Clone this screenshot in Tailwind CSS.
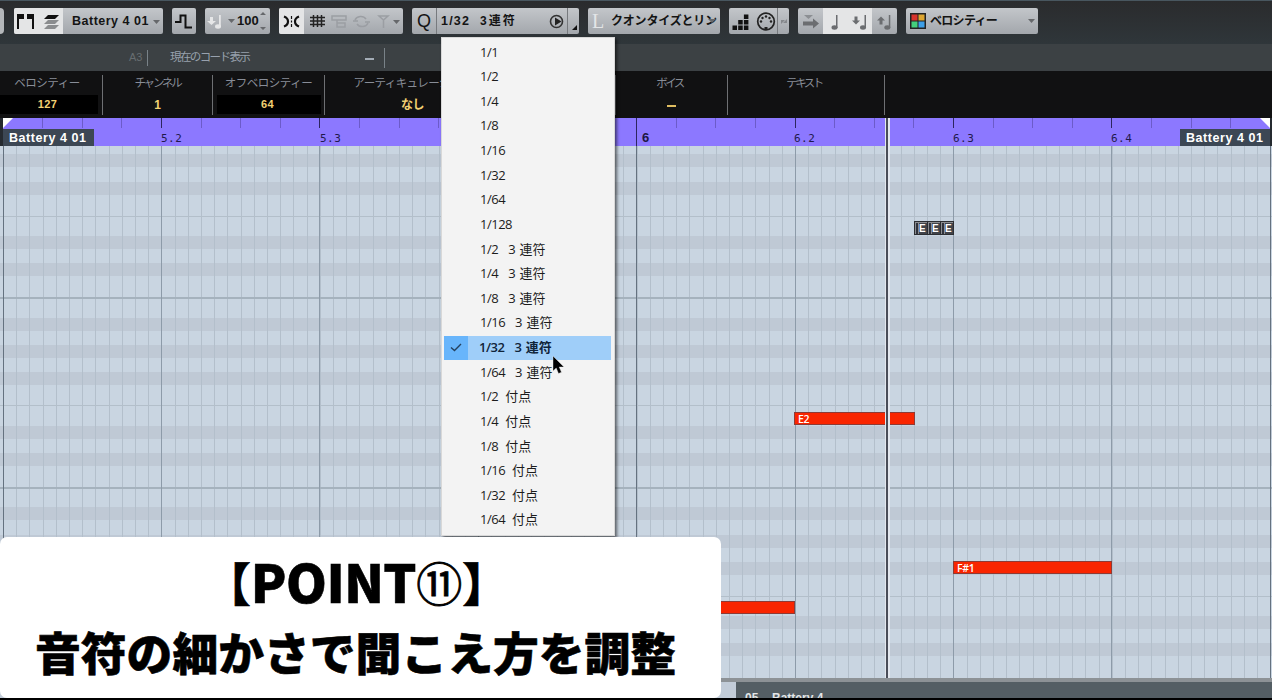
<!DOCTYPE html>
<html lang="ja">
<head>
    <meta charset="UTF-8">
    <meta name="viewport" content="width=device-width, initial-scale=1.0">
    <title>Key Editor</title>
    <script src="https://cdn.jsdelivr.net/npm/@tailwindcss/browser@4"></script>
</head>
<body class="overflow-hidden bg-black">
    <div class="relative flex h-[700px] w-[1272px] flex-col overflow-hidden font-['Liberation_Sans','Noto_Sans_CJK_JP',sans-serif]">

        <!-- Toolbar -->
        <div class="flex h-11 shrink-0 items-start gap-[9px] border-t border-[#48565f] bg-linear-to-b from-[#2a2b2d] to-[#2f363a] pt-[7px] text-[#141414]">
            <div class="mr-px h-[26px] w-1 rounded-r-sm bg-[#b4b7ba]"></div>

            <div class="flex h-[26px] w-[149px] items-center overflow-hidden rounded-[2px] bg-linear-to-b from-[#c3c6ca] to-[#a3a7ac]">
                <div class="flex h-full w-[49px] items-center bg-[#e4e5e6]">
                    <svg width="49" height="26" viewBox="0 0 49 26">
                        <path d="M3 6h7v5H5v10H3zM13 6h7v15h-2V11h-5z" fill="#111"/>
                        <path d="M34 7h11l-4 4H30z" fill="#111"/>
                        <path d="M34 12h11l-4 4H30zM34 17h11l-4 4H30z" fill="#8b8d8f"/>
                    </svg>
                </div>
                <span class="ml-[9px] w-[81px] text-[12.5px] font-bold tracking-[0.5px] whitespace-nowrap">Battery 4 01</span>
                <svg width="7" height="4" class="mt-px"><path d="M0 0h7L3.500 4z" fill="#66686b"/></svg>
            </div>

            <div class="h-[26px] w-6 rounded-[2px] bg-linear-to-b from-[#c3c6ca] to-[#a3a7ac]">
                <svg width="24" height="26" viewBox="0 0 24 26"><path d="M3 14h5.500V7.500h5V19.500H20" fill="none" stroke="#111" stroke-width="2"/></svg>
            </div>

            <div class="flex h-[26px] w-[65px] items-center rounded-[2px] bg-linear-to-b from-[#c3c6ca] to-[#a3a7ac]">
                <svg width="22" height="26" viewBox="0 0 22 26" class="shrink-0">
                    <path d="M5 9h3v4h3l-4.500 4L2 13h3zM14 7h1.800v12H14z" fill="#e6e7e8"/>
                    <ellipse cx="13" cy="18.500" rx="3" ry="2.200" fill="#e6e7e8"/>
                </svg>
                <svg width="7" height="4" class="ml-px shrink-0"><path d="M0 0h7L3.500 4z" fill="#66686b"/></svg>
                <span class="ml-[2px] w-[23px] text-[13px] font-bold">100</span>
                <svg width="6" height="22" viewBox="0 0 6 22"><path d="M0 5h6L3 2zM0 17h6l-3 3z" fill="#66686b"/></svg>
            </div>

            <div class="flex h-[26px] w-[124px] items-center overflow-hidden rounded-[2px] bg-linear-to-b from-[#c3c6ca] to-[#a3a7ac]">
                <svg width="124" height="26" viewBox="0 0 124 26">
                    <rect width="25" height="26" fill="#e4e5e6"/>
                    <path d="M5 8.500q4 1.500 4 5t-4 5M20 8.500q-4 1.500-4 5t4 5" fill="none" stroke="#111" stroke-width="2.200"/>
                    <path d="M12.500 8v3M12.500 12.500v2M12.500 16v3" stroke="#111" stroke-width="1.200"/>
                    <path d="M34.500 7v12M38.500 7v12M42.500 7v12M31 9.500h15M31 13h15M31 16.500h15" stroke="#222" stroke-width="1.500"/>
                    <g fill="none" stroke="#9b9ea3" stroke-width="1.500">
                        <rect x="53" y="8" width="14" height="4"/><path d="M58 12v7h8v-4h-8"/>
                        <path d="M76 12a6 5 0 0 1 11-1M89 15a6 5 0 0 1-11 1M74 13h5M86 14h5"/>
                        <path d="M100 8h9l-4.500 4zM104.500 11v9"/>
                    </g>
                    <path d="M114 12h7l-3.500 4z" fill="#66686b"/>
                </svg>
            </div>

            <!-- Quantize preset -->
            <div class="flex h-[26px] w-[167px] items-center rounded-[2px] bg-linear-to-b from-[#c3c6ca] to-[#a3a7ac]">
                <div class="flex h-full w-[25px] items-center justify-center border-r border-[#777a7e] text-lg">Q</div>
                <span class="ml-1 flex w-[108px] items-baseline font-bold whitespace-pre"><span class="w-[39px] text-[12.5px] tracking-[1.2px]">1/32</span><span class="text-[12px] tracking-[2px]">3連符</span></span>
                <svg width="15" height="15" viewBox="0 0 15 15"><circle cx="7.500" cy="7.500" r="6" fill="none" stroke="#333" stroke-width="1.600"/><path d="M6 3.500l6.500 4L6 11.500z" fill="#222"/></svg>
                <div class="ml-[3px] h-full border-l border-[#777a7e]"><svg width="10" height="26"><path d="M9 17v5H4z" fill="#111"/></svg></div>
            </div>

            <div class="flex h-[26px] w-[132px] items-center rounded-[2px] bg-linear-to-b from-[#c3c6ca] to-[#a3a7ac]">
                <span class="ml-1 w-[19px] font-['Liberation_Serif',serif] text-xl text-[#e3e5e7]">L</span>
                <span class="w-[97px] text-[12px] font-bold tracking-[-0.2px] whitespace-nowrap">クオンタイズとリン</span>
                <svg width="8" height="4" class="relative z-10 shrink-0"><path d="M0 0h8L4 4z" fill="#66686b"/></svg>
            </div>

            <!-- Step / MIDI input -->
            <div class="h-[26px] w-[60px] rounded-[2px] bg-linear-to-b from-[#c3c6ca] to-[#a3a7ac]">
                <svg width="60" height="26" viewBox="0 0 60 26">
                    <path d="M3 17.500h4.500V22H3zM8.700 17.500h4.500V22H8.700zM14.400 17.500h4.500V22h-4.500zM8.700 12h4.500v4.500H8.700zM14.400 12h4.500v4.500h-4.500zM14.400 6.500h4.500V11h-4.500z" fill="#111" transform="translate(.5)"/>
                    <circle cx="37" cy="13.500" r="8.300" fill="none" stroke="#222" stroke-width="1.700"/>
                    <path d="M35.500 21h3v-2h-3z" fill="#222"/>
                    <g fill="#222"><circle cx="32" cy="13.500" r="1.200"/><circle cx="33.500" cy="10" r="1.200"/><circle cx="37" cy="8.500" r="1.200"/><circle cx="40.500" cy="10" r="1.200"/><circle cx="42" cy="13.500" r="1.200"/></g>
                    <path d="M48.500 0v26" stroke="#777a7e"/>
                    <path d="M52 12h4l-4 4zM58 15h-4l4-4z" fill="#85888c"/>
                </svg>
            </div>

            <div class="h-[26px] w-[99px] overflow-hidden rounded-[2px] bg-linear-to-b from-[#c3c6ca] to-[#a3a7ac]">
                <svg width="99" height="26" viewBox="0 0 99 26">
                    <rect x="25" width="49" height="26" fill="#e4e5e6"/>
                    <path d="M6 7h9l-4.500 4z" fill="#8c8f93"/>
                    <g fill="#6b6d70">
                        <path d="M5 13.500h10v-3l6 5-6 5v-3H5z"/>
                        <path d="M38 7h1.500v13H38z"/><ellipse cx="36.500" cy="19.500" rx="3" ry="2.200"/>
                        <path d="M56.500 8.500h3v4h2.500l-4 4-4-4h2.500zM66.500 7h1.500v13h-1.500z"/><ellipse cx="65" cy="19.500" rx="3" ry="2.200"/>
                        <path d="M81.500 16.500h3v-4H87l-4-4-4 4h2.500zM90.800 7h1.500v13h-1.500z"/><ellipse cx="89.300" cy="19.500" rx="3" ry="2.200"/>
                    </g>
                </svg>
            </div>

            <div class="flex h-[26px] w-[132px] items-center rounded-[2px] bg-linear-to-b from-[#c3c6ca] to-[#a3a7ac]">
                <svg width="16" height="16" viewBox="0 0 16 16" class="ml-1">
                    <rect width="16" height="16" fill="#222"/>
                    <path d="M1.500 1.500h6v6h-6z" fill="#d8332c"/><path d="M8.500 1.500h6v6h-6z" fill="#dda52f"/>
                    <path d="M1.500 8.500h6v6h-6z" fill="#43cf7c"/><path d="M8.500 8.500h6v6h-6z" fill="#3d9fe8"/>
                </svg>
                <span class="ml-1 w-[98px] text-[12px] font-bold tracking-[-0.7px]">ベロシティー</span>
                <svg width="7" height="4"><path d="M0 0h7L3.500 4z" fill="#66686b"/></svg>
            </div>
        </div>

        <!-- Chord display -->
        <div class="flex h-[27px] shrink-0 items-center bg-[#3c4144] text-[11px] text-[#98a1ad]">
            <span class="ml-[129px] w-[18px] text-[#676d70]">A3</span>
            <span class="h-4 w-px bg-[#798288]"></span>
            <span class="ml-[22px] w-[195px] text-[11.5px] tracking-[-1.6px]">現在のコード表示</span>
            <span class="mt-[2px] h-[2px] w-[9px] bg-[#a3acb6]"></span>
            <span class="ml-[10px] h-5 w-px bg-[#798288]"></span>
        </div>

        <!-- Note info line -->
        <div class="flex h-[47px] shrink-0 bg-[#111112] pt-1 text-center text-[11.500px] leading-4 text-[#888d97]">
            <div class="h-[40px] w-[103px] border-r border-[#6e7073]"><p class="-ml-2 tracking-[-0.5px]">ベロシティー</p><p class="mt-1 h-[19px] w-[98px] bg-black pr-[3px] text-[11px] leading-[19px] font-bold tracking-[0.4px] text-[#f3d173]">127</p></div>
            <div class="h-[40px] w-[110px] border-r border-[#6e7073]"><p class="tracking-[-2.2px]">チャンネル</p><p class="mt-[5px] text-[12px] leading-[19px] font-bold text-[#f3d173]">1</p></div>
            <div class="h-[40px] w-[112px] border-r border-[#6e7073]"><p class="tracking-[-0.5px]">オフベロシティー</p><p class="mt-1 ml-1 h-[19px] w-[104px] bg-black pr-[3px] text-[11px] leading-[19px] font-bold tracking-[0.4px] text-[#f3d173]">64</p></div>
            <div class="h-[40px] w-[175px]"><p class="tracking-[-0.6px] whitespace-nowrap">アーティキュレーション</p><p class="mt-[5px] text-[12px] leading-[19px] font-bold tracking-[-0.5px] text-[#f3d173]">なし</p></div>
            <div class="h-[40px] w-[116px] border-r border-[#6e7073]"></div>
            <div class="h-[40px] w-[112px] border-r border-[#6e7073]"><p class="-ml-1 tracking-[-2.5px]">ボイス</p><p class="mx-auto mt-[14px] h-[2px] w-[9px] bg-[#dfbd61]"></p></div>
            <div class="h-[40px] w-[157px] border-r border-[#6e7073]"><p class="-ml-1 tracking-[-2.5px]">テキスト</p></div>
        </div>

        <!-- Ruler and note grid -->
        <svg id="editor" class="block shrink-0" width="1272" height="560" viewBox="0 118 1272 560" shape-rendering="crispEdges"></svg>

        <!-- Controller lane -->
        <div class="h-1 shrink-0 bg-[#8d9296]"></div>
        <div class="flex h-4 shrink-0 bg-[#c2ccd8] pl-[736px]">
            <div class="flex flex-1 overflow-hidden bg-[#545e64] pl-[9px] text-[12px] leading-4 font-bold text-[#e3e6e8]"><span class="mt-[8px] w-[27px] shrink-0">05</span><span class="mt-[8px]">Battery 4</span></div>
        </div>

        <!-- Quantize menu -->
        <div id="quantize-menu" class="absolute top-[37px] left-[441px] h-[499px] w-[174px] border border-[#d8d8d8] bg-[#f3f3f3] pt-[2px] font-['Open_Sans','Noto_Sans_CJK_JP',sans-serif] text-[13px] text-[#1c1c1c] shadow-[2px_2px_3px_rgba(0,0,0,0.55)]"></div>

        <svg class="absolute top-[355px] left-[552px]" width="13" height="20" viewBox="0 0 13 20"><path d="M1 1v15l3.200-3 2.300 5.500 3-1.200L7.200 12H12z" fill="#000" stroke="#eee" stroke-width=".4"/></svg>

        <!-- Caption -->
        <div class="absolute top-[537px] left-0 h-[161px] w-[721px] rounded-[7px] bg-white font-['Noto_Sans_CJK_JP',sans-serif] font-black text-black">
            <p class="mt-[9px] flex h-[70px] items-center justify-center text-[46px] leading-[70px] whitespace-nowrap [-webkit-text-stroke:0.6px_black]"><span class="-ml-[31px]">【</span><span class="text-[52px] tracking-[-0.5px]">POINT</span><span class="font-normal [-webkit-text-stroke:0.9px_black]">⑪</span><span class="-mr-[23px]">】</span></p>
            <p class="flex h-[70px] items-center pl-[35px] text-[45.800px] leading-[70px] whitespace-nowrap [-webkit-text-stroke:0.6px_black]">音符の細かさで聞こえ方を調整</p>
        </div>
    </div>

    <script>
        const editor = document.getElementById('editor');
        const BEAT = 158.4;
        const START = 3;
        const rect = (x, y, w, h, fill) => `<rect x="${x}" y="${y}" width="${w}" height="${h}" fill="${fill}"/>`;
        let out = rect(0, 146, 1272, 532, '#c9d5e1');

        // black keys
        [154, 182, 236, 263, 318, 345, 372, 426, 453, 507, 535, 562, 616, 643].forEach(y => out += rect(0, y, 1272, 13, '#bfc9d5'));
        // 1/48 grid
        for (let i = 0; i <= 96; i++) out += rect(Math.round(START + i * BEAT / 12), 146, 1, 532, '#b3bfcb');
        [216, 405, 596].forEach(y => out += rect(0, y, 1272, 1, '#b3bfca'));
        [297, 487].forEach(y => out += rect(0, y, 1272, 2, '#a5b2bd'));
        for (let b = 0; b <= 8; b++) out += rect(Math.floor(START + b * BEAT), 146, 1, 532, b % 4 ? '#8d9ba9' : '#657280');

        // ruler
        out += rect(0, 118, 1272, 28, '#8c78ff') + rect(0, 118, 3, 28, '#252a30') + rect(1270, 118, 2, 28, '#252a30');
        for (let i = 1; i < 32; i++) out += rect(Math.floor(START + i * BEAT / 4), 118, 1, i === 16 ? 28 : 10, i % 4 ? '#6c5bc9' : '#2d2560');
        [['5.2', 161], ['5.3', 320], ['6.2', 794], ['6.3', 953], ['6.4', 1111]].forEach(([t, x]) => {
            out += `<text x="${x}" y="142" font-family="DejaVu Sans Mono, monospace" font-size="11" letter-spacing="0.5" fill="#1f184c">${t}</text>`;
        });
        out += '<text x="642" y="142" font-family="Liberation Sans, sans-serif" font-weight="bold" font-size="13" fill="#1c1644">6</text>';
        out += '<path d="M3 118h10L3 128zM1260 118h10v10z" fill="#fff" shape-rendering="auto"/>';
        out += rect(3, 129, 91, 17, '#3c4754') + rect(1180, 129, 90, 17, '#3c4754');
        [9, 1186].forEach(x => {
            out += `<text x="${x}" y="142" font-family="Liberation Sans, sans-serif" font-weight="bold" font-size="12.500" textLength="77" fill="#fff">Battery 4 01</text>`;
        });

        // notes
        const note = (x, y, w, label) => {
            out += `<rect x="${x + .5}" y="${y + .5}" width="${w - 1}" height="12" fill="#f92500" stroke="#8e3a35"/>`;
            if (label) out += `<text x="${x + 4}" y="${y + 10.500}" font-family="Open Sans, sans-serif" font-weight="600" font-size="10.500" letter-spacing="-0.3" fill="#fff">${label}</text>`;
        };
        note(794, 412, 121, 'E2');
        note(953, 561, 159, 'F#1');
        note(637, 601, 158, '');
        [914, 927, 940].forEach(x => {
            out += `<rect x="${x + .5}" y="221.500" width="13" height="13" fill="#8b8d91" stroke="#2c2e32"/>` + rect(x + 2, 223, 2, 11, '#30333c')
                + rect(x + 5, 223, 8, 11, '#414349')
                + `<text x="${x + 5}" y="232" font-family="Liberation Sans, sans-serif" font-weight="bold" font-size="10" fill="#fff">E</text>`;
        });

        // playhead
        out += rect(885, 118, 5, 560, '#e3e7ee') + rect(886, 118, 2, 560, '#4a4d58');
        editor.innerHTML = out;

        const triplet = '連符', dotted = '付点';
        const items = [
            ['1/1'], ['1/2'], ['1/4'], ['1/8'], ['1/16'], ['1/32'], ['1/64'], ['1/128'],
            ['1/2', triplet], ['1/4', triplet], ['1/8', triplet], ['1/16', triplet], ['1/32', triplet], ['1/64', triplet],
            ['1/2', dotted], ['1/4', dotted], ['1/8', dotted], ['1/16', dotted], ['1/32', dotted], ['1/64', dotted],
        ];
        document.getElementById('quantize-menu').innerHTML = items.map(([value, kind], i) => {
            const selected = i === 12;
            return `<div class="ml-[2px] mr-[3px] flex h-[24.63px] items-center ${selected ? 'bg-[#9fcef9] font-semibold text-[#10243a]' : ''}">
                <span class="flex h-full w-[24px] items-center justify-center ${selected ? 'bg-[#68b5fb]' : ''}">${selected ? '<svg width="12" height="9" viewBox="0 0 12 9"><path d="M1 4.500l3.500 3L11 1" fill="none" stroke="#24415e" stroke-width="1.400"/></svg>' : ''}</span>
                <span class="${selected ? 'ml-[11px]' : 'ml-3'} tracking-[-0.5px]">${value}</span>
                ${kind === triplet ? '<span class="ml-[10px] mr-[4px]">3</span><span>連符</span>' : ''}
                ${kind === dotted ? '<span class="ml-[7px]">付点</span>' : ''}
            </div>`;
        }).join('');
    </script>
</body>
</html>
